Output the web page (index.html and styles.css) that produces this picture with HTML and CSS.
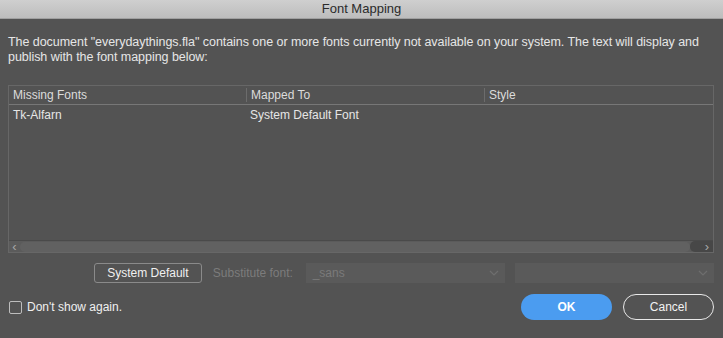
FILE: index.html
```html
<!DOCTYPE html>
<html lang="en">
<head>
  <meta charset="UTF-8" />
  <title>Font Mapping</title>
  <link rel="stylesheet" href="styles.css">
</head>
<body>
  <div class="titlebar">Font Mapping</div>

  <div class="content">
    <p class="intro">The document "everydaythings.fla" contains one or more fonts currently not available on your system. The text will display and publish with the font mapping below:</p>

    <div class="table">
      <div class="row head">
        <div class="col c1">Missing Fonts</div>
        <div class="col c2">Mapped To</div>
        <div class="col c3">Style</div>
      </div>
      <div class="row">
        <div class="col c1">Tk-Alfarn</div>
        <div class="col c2">System Default Font</div>
        <div class="col c3"></div>
      </div>
      <div class="spacer"></div>
      <div class="scrollbar">
        <span class="arrow left">&#8249;</span>
        <div class="thumb"></div>
        <span class="arrow right">&#8250;</span>
      </div>
    </div>

    <div class="mapping">
      <button class="btn-default">System Default</button>
      <span class="sub-label">Substitute font:</span>
      <div class="select wide">
        <span>_sans</span>
        <svg width="10" height="6" viewBox="0 0 10 6"><path d="M1 1l4 4 4-4" fill="none" stroke="#6e6e6e" stroke-width="1.2"/></svg>
      </div>
      <div class="select">
        <span></span>
        <svg width="10" height="6" viewBox="0 0 10 6"><path d="M1 1l4 4 4-4" fill="none" stroke="#6e6e6e" stroke-width="1.2"/></svg>
      </div>
    </div>

    <div class="footer">
      <label class="check"><span class="box"></span>Don't show again.</label>
      <div class="actions">
        <button class="ok">OK</button>
        <button class="cancel">Cancel</button>
      </div>
    </div>
  </div>
</body>
</html>
```

FILE: styles.css
```css
body {
  margin: 0;
  width: 723px;
  height: 338px;
  background: #535353;
  font-family: "Liberation Sans", Arial, sans-serif;
  color: #e6e6e6;
  overflow: hidden;
}

.titlebar {
  height: 18px;
  line-height: 18px;
  text-align: center;
  font-size: 13px;
  color: #2b2b2b;
  background: linear-gradient(#cfcfcf, #bdbdbd);
  border-bottom: 1px solid #a0a0a0;
}

.content {
  padding: 0 9px 0 8px;
}

.intro {
  margin: 16px 0 0;
  font-size: 12.5px;
  line-height: 15px;
  letter-spacing: -0.05px;
}

.table {
  margin-top: 20px;
  height: 166px;
  border: 1px solid #676767;
  display: flex;
  flex-direction: column;
}

.row {
  display: flex;
  height: 20px;
  align-items: center;
  font-size: 12px;
}

.row.head {
  height: 18px;
  border-bottom: 1px solid #777;
  color: #dcdcdc;
}

.col {
  padding-left: 4px;
  box-sizing: border-box;
}

.c1 { width: 237px; }
.c2 { width: 238px; }
.c3 { flex: 1; }

.head .c2,
.head .c3 {
  border-left: 1px solid #6c6c6c;
}

.spacer {
  flex: 1;
}

.scrollbar {
  height: 11px;
  display: flex;
  align-items: center;
  background: #5b5b5b;
  border-top: 1px solid #4a4a4a;
}

.arrow {
  color: #a8a8a8;
  font-size: 13px;
  line-height: 11px;
  width: 11px;
  text-align: center;
}

.arrow.right {
  width: 23px;
  height: 11px;
  background: #474747;
  border-radius: 5px 0 0 5px;
  text-align: right;
  padding-right: 4px;
  box-sizing: border-box;
}

.thumb {
  flex: 1;
  height: 10px;
  background: #616161;
  border-radius: 5px;
}

.mapping {
  display: flex;
  align-items: center;
  margin-top: 10px;
  height: 20px;
}

.btn-default {
  margin-left: 86px;
  width: 108px;
  height: 20px;
  background: #535353;
  border: 1px solid #8a8a8a;
  border-radius: 3px;
  color: #f0f0f0;
  font-family: inherit;
  font-size: 12px;
  padding: 0;
}

.sub-label {
  margin-left: 11px;
  font-size: 12px;
  color: #7c7c7c;
  width: 93px;
}

.select {
  width: 199px;
  height: 20px;
  background: #5a5a5a;
  display: flex;
  align-items: center;
  justify-content: space-between;
  padding: 0 6px 0 7px;
  box-sizing: border-box;
  font-size: 12px;
  color: #7a7a7a;
}

.select.wide {
  width: 200px;
  margin-right: 10px;
}

.footer {
  display: flex;
  align-items: center;
  justify-content: space-between;
  margin-top: 11px;
}

.check {
  display: flex;
  align-items: center;
  font-size: 12px;
  color: #f0f0f0;
  margin-left: 1px;
}

.box {
  width: 11px;
  height: 11px;
  border: 1px solid #bdbdbd;
  border-radius: 2px;
  margin-right: 5px;
}

.actions {
  display: flex;
  gap: 11px;
}

.ok,
.cancel {
  width: 91px;
  height: 26px;
  border-radius: 13px;
  font-family: inherit;
  font-size: 12px;
  padding: 0;
}

.ok {
  background: #4b9cf0;
  border: none;
  color: #fff;
  font-weight: bold;
}

.cancel {
  background: transparent;
  border: 1px solid #e8e8e8;
  color: #f2f2f2;
}
```
